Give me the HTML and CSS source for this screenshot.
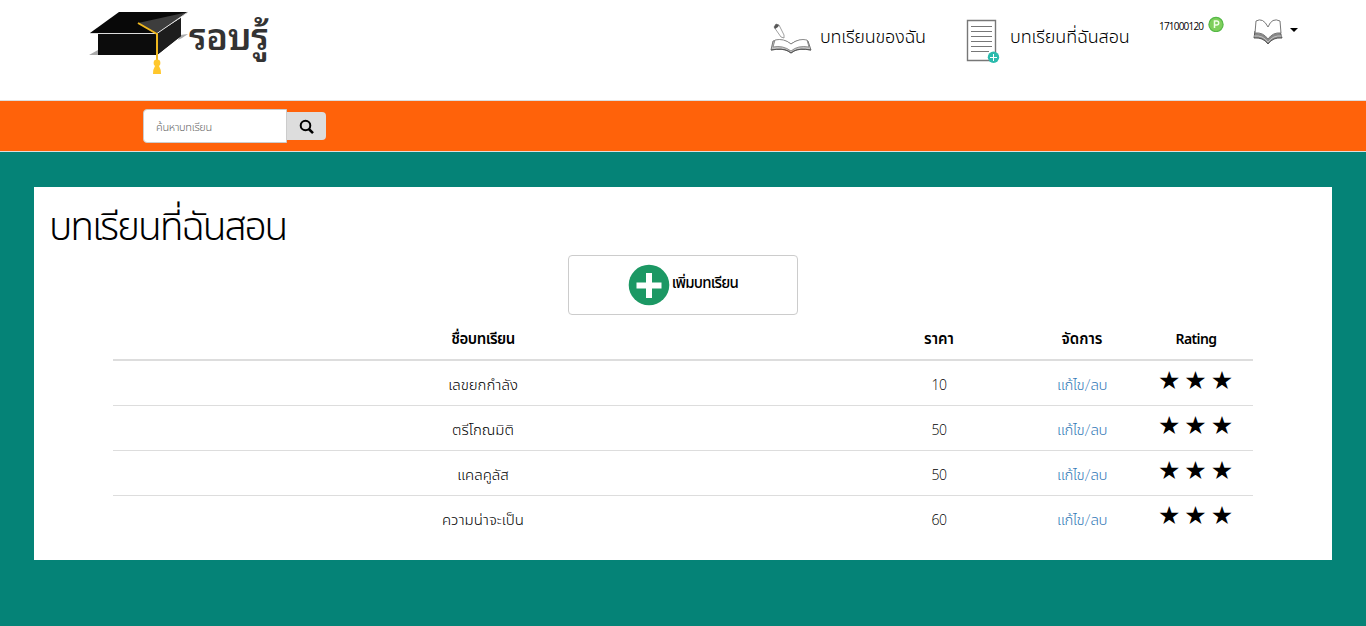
FILE: index.html
```html
<!DOCTYPE html>
<html lang="th">
<head>
<meta charset="utf-8">
<title>รอบรู้</title>
<link rel="stylesheet" href="styles.css">
</head>
<body>
<header class="header">
  <a class="brand">
    <svg class="cap" width="100" height="66" viewBox="0 0 100 66">
      <path d="M0 46l9-5v5zM91 26l8-1-6 4-4 2z" fill="#aaa"/>
      <path d="M9 25h58L92 9v18L68 46H9z" fill="#0c0c0c"/>
      <path d="M67 25l25-16v18L68 46z" fill="#1d1d1d"/>
      <path d="M1 24L30 3h69L68 24z" fill="#080808"/>
      <path d="M49 14L99 3 68 24z" fill="#3d3d3d"/>
      <path d="M1 24.500h67L99 3" fill="none" stroke="#ddd" stroke-width="1"/>
      <path d="M49 14l19 11v27" fill="none" stroke="#efb81f" stroke-width="2"/>
      <circle cx="68" cy="54" r="3.400" fill="#ffc72c"/>
      <path d="M66 57h4q2 3 2 8h-8q0-5 2-8z" fill="#ffc72c"/>
    </svg>
    <span class="brand-name">รอบรู้</span>
  </a>
  <nav class="nav">
    <a class="item lessons">
      <svg width="42" height="32" viewBox="0 0 42 32">
        <path d="M3 18q10-3 18 3 8-6 17-3l3 9q-11-2-17 1l-3 2-3-2q-6-3-17-1z" fill="#c4c4c4" stroke="#777"/>
        <path d="M5 17q9-2 16 4 8-6 16-4l2 7q-11-2-18 4-8-6-18-4z" fill="#fff" stroke="#777" stroke-width=".8"/>
        <path d="M1 27q12-2 17 1l3 2 3-2q5-3 17-1" fill="none" stroke="#555"/>
        <path d="M4 4l2-3 3 1 5 10v3l-3-1z" fill="#fff" stroke="#888" stroke-width=".8"/>
        <path d="M4 4l2-3 3 1-1 2-3 2z" fill="#555"/>
      </svg>
      <span class="t t-lessons">บทเรียนของฉัน</span>
    </a>
    <a class="item teaching">
      <svg width="34" height="44" viewBox="0 0 34 44">
        <path d="M1.500 1.500h28v40h-28z" fill="#fff" stroke="#777" stroke-width="1.400"/>
        <path d="M5 7.500h21M5 12.500h21M5 17.500h21M5 22.500h21M5 27.500h21M5 32.500h18" stroke="#777" stroke-width="1.200"/>
        <circle cx="27.500" cy="38.300" r="5.700" fill="#2bbbad"/>
        <path d="M24 38.500h7M27.500 35v7" stroke="#fff"/>
      </svg>
      <span class="t t-teaching">บทเรียนที่ฉันสอน</span>
    </a>
    <a class="points">
      <span class="t t-points">171000120</span>
      <svg width="16" height="16" viewBox="0 0 16 16">
        <circle cx="8" cy="8.500" r="7.100" fill="#7fcf5c" stroke="#55b947" stroke-width="1.200"/>
        <path d="M6.500 12V5h2.200a2 2 0 0 1 0 4H6.500" fill="none" stroke="#efffe5" stroke-width="1.500"/>
      </svg>
    </a>
    <a class="account">
      <svg width="30" height="28" viewBox="0 0 30 28">
        <path d="M2 13q9-1 13 6 5-7 12-6l2 7q-9-1-14 6-5-7-14-6z" fill="#888" stroke="#555"/>
        <path d="M1 18q9-1 14 6 5-7 14-6" fill="none" stroke="#ddd" stroke-width=".7"/>
        <path d="M3 3Q10-1 15 9q4-10 12-6l1 12q-8-1-13 6-5-7-13-6z" fill="#fff" stroke="#777"/>
      </svg>
      <i class="caret"></i>
    </a>
  </nav>
</header>
<form class="searchbar">
  <input class="search" type="text" placeholder="ค้นหาบทเรียน">
  <button class="search-btn" type="button">
    <svg width="16" height="16" viewBox="0 0 16 16"><circle cx="6.500" cy="6.500" r="4.800" fill="none" stroke="#000" stroke-width="2"/><path d="M9.800 10l4.200 4.100" stroke="#000" stroke-width="2.600"/></svg>
  </button>
</form>
<main class="card">
  <h1 class="title"><span class="t t-title">บทเรียนที่ฉันสอน</span></h1>
  <button class="add" type="button">
    <svg width="42" height="42" viewBox="0 0 42 42"><circle cx="21" cy="21" r="20.300" fill="#1c9864"/><path d="M21 9v25M8.500 21.500h25" stroke="#fff" stroke-width="6"/></svg>
    <b class="t t-add">เพิ่มบทเรียน</b>
  </button>
  <table class="table">
    <colgroup><col class="c-name"><col class="c-price"><col class="c-small"><col class="c-small"></colgroup>
    <thead><tr><th class="h-name">ชื่อบทเรียน</th><th>ราคา</th><th>จัดการ</th><th class="h-rating">Rating</th></tr></thead>
    <tbody>
      <tr><td>เลขยกกำลัง</td><td class="price">10</td><td><a class="link">แก้ไข/ลบ</a></td><td class="stars">★ ★ ★</td></tr>
      <tr><td>ตรีโกณมิติ</td><td class="price">50</td><td><a class="link">แก้ไข/ลบ</a></td><td class="stars">★ ★ ★</td></tr>
      <tr><td>แคลคูลัส</td><td class="price">50</td><td><a class="link">แก้ไข/ลบ</a></td><td class="stars">★ ★ ★</td></tr>
      <tr><td>ความน่าจะเป็น</td><td class="price">60</td><td><a class="link">แก้ไข/ลบ</a></td><td class="stars">★ ★ ★</td></tr>
    </tbody>
  </table>
</main>
</body>
</html>
```
FILE: styles.css
```css
* { box-sizing: border-box; }
body { margin: 0; min-height: 626px; background: #058377; color: #000; font: 300 15px/20px Lato, "Noto Sans Thai", "Noto Sans", sans-serif; }
.header { height: 101px; display: flex; background: #fff; border-bottom: 1px solid #ddd; }
.brand { display: flex; width: 680px; padding: 9px 0 0 89px; }
.brand-name { font-family: "Noto Sans Thai Looped", Loma, Garuda, "Noto Sans Thai", sans-serif; font-size: 36px; font-weight: 600; line-height: 50px; letter-spacing: -.3px; color: #333; white-space: nowrap; }
.nav { display: flex; align-items: flex-start; padding-left: 90px; }
.t { white-space: nowrap; }
.item { display: flex; font-size: 18px; line-height: 24px; }
.lessons { width: 196px; padding-top: 23px; gap: 8px; }
.lessons .t { padding-top: 1px; letter-spacing: -.2px; }
.teaching { width: 193px; padding-top: 19px; gap: 10px; }
.teaching .t { padding-top: 5px; letter-spacing: -.1px; }
.points { display: flex; width: 94px; padding-top: 16px; gap: 4px; }
.t-points { font-family: "Open Sans", sans-serif; font-size: 10px; font-weight: 400; width: 45px; letter-spacing: -.8px; }
.account { display: flex; padding-top: 18px; gap: 7px; }
.caret { margin-top: 10px; height: 4px; border: 4px solid transparent; border-top-color: #000; border-bottom: 0; }
.searchbar { height: 51px; display: flex; background: #ff620a; border-bottom: 1px solid #ddd; padding: 8px 0 0 143px; }
.search { width: 144px; height: 34px; padding: 1px 12px 0; border: 1px solid #ccc; border-radius: 4px 0 0 4px; font: 300 11px Lato, "Noto Sans Thai", "Noto Sans", sans-serif; letter-spacing: -.3px; }
.search::placeholder { color: #666; }
.search-btn { width: 39px; height: 28px; margin-top: 3px; padding: 2px 0 0; border: 0; border-radius: 0 4px 4px 0; background: #ddd; display: flex; align-items: center; justify-content: center; }
.card { height: 373px; margin: 35px 34px 0; background: #fff; display: flex; flex-direction: column; align-items: center; }
.title { align-self: flex-start; height: 68px; margin: 0; padding: 14px 0 0 15px; font-size: 39px; font-weight: 350; line-height: 48px; letter-spacing: -2.050px; }
.add { width: 230px; height: 60px; display: flex; justify-content: center; border: 1px solid #ccc; border-radius: 4px; background: #fff; padding: 8px 0 0; gap: 2px; font: inherit; color: #000; }
.add .t { padding-top: 8px; font-weight: 500; letter-spacing: -.75px; }
.table { width: 1140px; table-layout: fixed; border-collapse: collapse; margin-top: 4px; text-align: center; }
.c-name { width: 740px; }
.c-price { width: 172px; }
.c-small { width: 114px; }
.table th { height: 41px; padding: 0 0 2px; font-size: 15px; font-weight: 600; }
.table .h-name { letter-spacing: -.5px; }
.table .h-rating { font-family: "Noto Sans", sans-serif; font-size: 14px; font-weight: 600; letter-spacing: -.6px; padding: 0; }
.table td { height: 45px; padding: 3px 0 0; border-bottom: 1px solid #ddd; white-space: nowrap; }
.table tr:last-child td { border-bottom: 0; }
.table .price { font-family: "Open Sans", sans-serif; font-size: 14px; font-weight: 300; letter-spacing: -.5px; padding-top: 5px; }
.link { color: #337ab7; letter-spacing: -.4px; }
.table .stars { font: 25px/30px "DejaVu Sans", sans-serif; word-spacing: -4px; padding: 0 1px 4px 0; }
.table thead th { border-bottom: 2px solid #ddd; }
```
